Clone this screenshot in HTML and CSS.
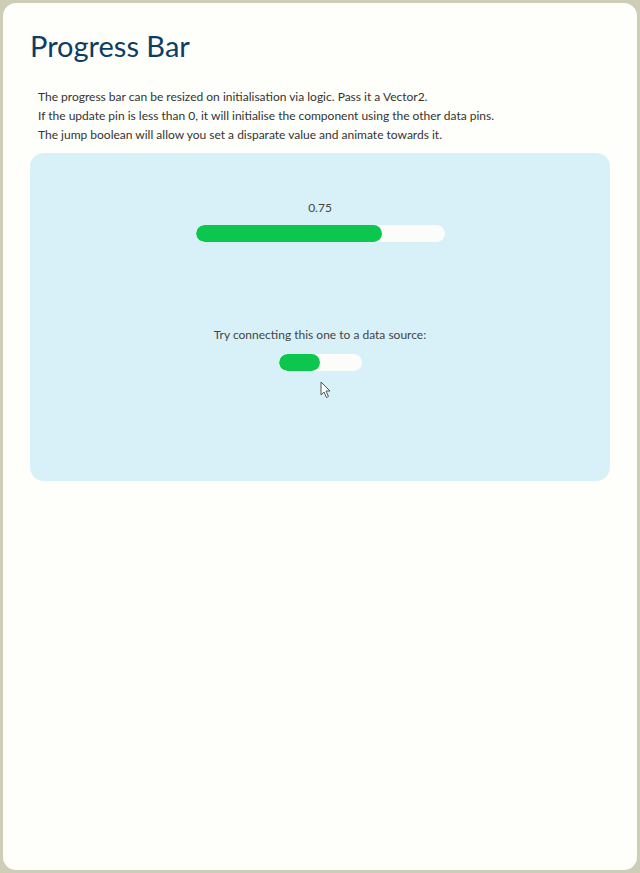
FILE: index.html
```html
<!DOCTYPE html>
<html>
<head>
<meta charset="utf-8">
<link rel="stylesheet" href="styles.css">
</head>
<body>
<div class="frame">
  <div class="card">
    <h1 class="title">Progress Bar</h1>
    <div class="desc">
      <p>The progress bar can be resized on initialisation via logic. Pass it a Vector2.</p>
      <p>If the update pin is less than 0, it will initialise the component using the other data pins.</p>
      <p>The jump boolean will allow you set a disparate value and animate towards it.</p>
    </div>
    <div class="panel">
      <div class="demo demo-one">
        <div class="value">0.75</div>
        <div class="bar bar-large"><div class="fill" style="width:75%"></div></div>
      </div>
      <div class="demo demo-two">
        <div class="value">Try connecting this one to a data source:</div>
        <div class="bar bar-small"><div class="fill" style="width:50%"></div></div>
        <svg class="cursor" width="12" height="18" viewBox="0 0 12 18"><path d="M1 1 L1 14 L4 11 L6.5 16.5 L8.5 15.5 L6 10 L10 10 Z" fill="#fff" stroke="#555" stroke-width="1"/></svg>
      </div>
    </div>
  </div>
</div>
</body>
</html>
```
FILE: styles.css
```css
html, body {
  margin: 0;
  padding: 0;
}
body {
  background: #cdcdb8;
  font-family: "Lato", "Open Sans", sans-serif;
}
.frame {
  height: 873px;
  box-sizing: border-box;
  padding: 3px 3px 3px 3px;
}
.card {
  height: 100%;
  box-sizing: border-box;
  background: #fefefa;
  border-radius: 13px;
  padding: 24px 27px 0 27px;
}
.title {
  margin: 0 0 0 0;
  font-weight: 400;
  font-size: 29px;
  line-height: 38px;
  color: #0d3d63;
}
.desc {
  margin-top: 22px;
  padding-left: 8px;
  font-size: 12px;
  line-height: 19px;
  color: #333;
}
.desc p {
  margin: 0;
}
.panel {
  margin-top: 9px;
  height: 328px;
  background: #d8f1f8;
  border-radius: 14px;
  display: flex;
  flex-direction: column;
  align-items: center;
  position: relative;
}
.demo {
  display: flex;
  flex-direction: column;
  align-items: center;
  position: relative;
}
.demo-one {
  margin-top: 46px;
}
.demo-two {
  margin-top: 84px;
}
.value {
  font-size: 12px;
  line-height: 18px;
  color: #444;
  margin-bottom: 8px;
}
.demo-two .value {
  margin-bottom: 10px;
}
.bar {
  background: #fcfdfb;
  border-radius: 9px;
  height: 17px;
  overflow: hidden;
}
.bar-large {
  width: 249px;
}
.bar-small {
  width: 83px;
}
.fill {
  height: 100%;
  background: #0cc64e;
  border-radius: 9px;
}
.cursor {
  position: absolute;
  left: 50%;
  top: 55px;
}
```
